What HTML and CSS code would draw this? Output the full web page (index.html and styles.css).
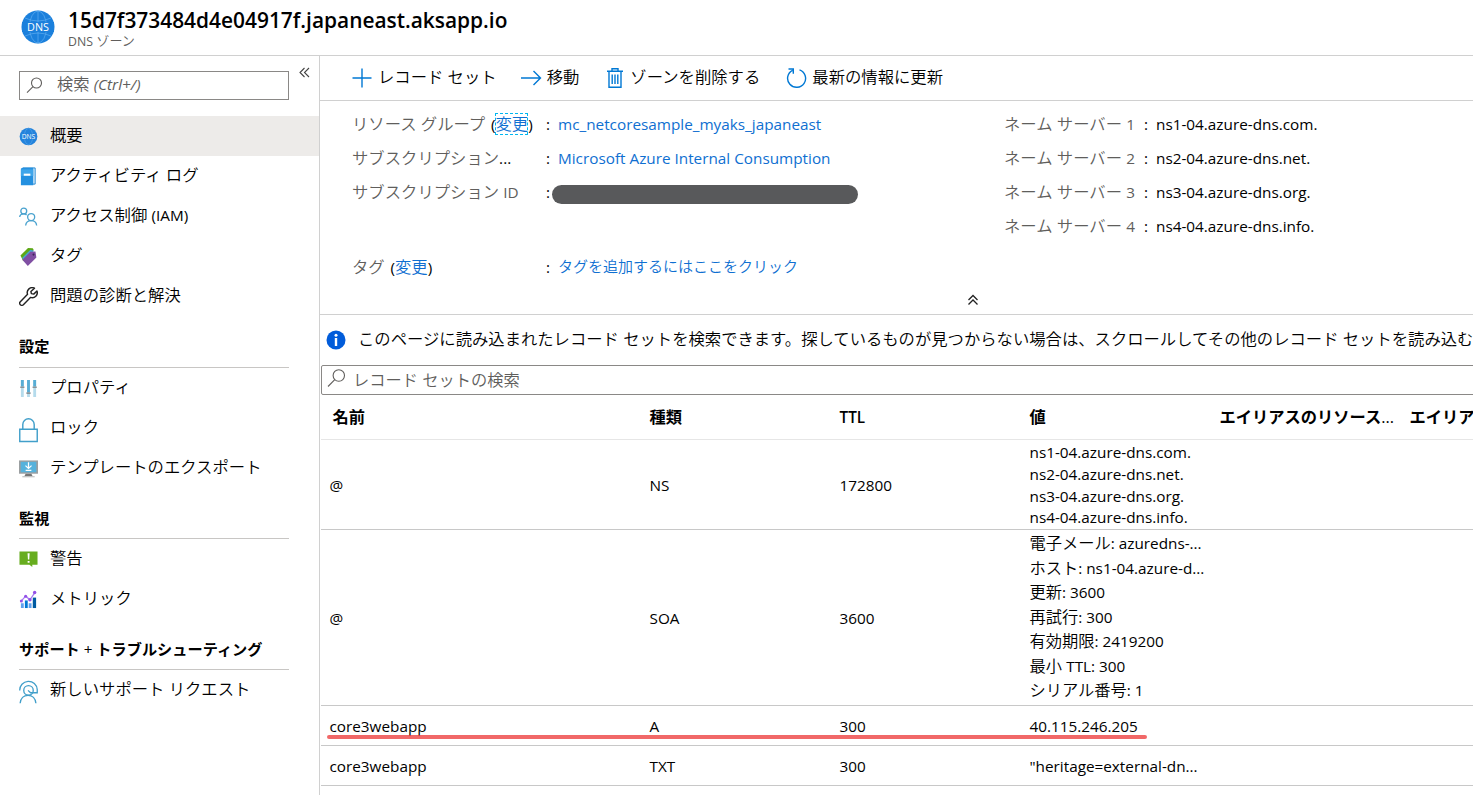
FILE: index.html
```html
<!DOCTYPE html>
<html lang="ja">
<head>
    <meta charset="utf-8">
    <title>15d7f373484d4e04917f.japaneast.aksapp.io</title>
    <link rel="stylesheet" href="styles.css">
</head>
<body>

    <header class="title-bar">
        <svg class="dns-logo" viewBox="0 0 34 34">
            <circle cx="17" cy="17" r="16.5" fill="#1b80dc"/>
            <g fill="none" stroke="#5eadf0" stroke-width=".7">
                <ellipse cx="17" cy="17" rx="8.5" ry="16"/>
                <path d="M17 1v32M4 8q13 6 26 0M4 26q13-6 26 0"/>
            </g>
            <path d="M1 12h32v10H1z" fill="#1b80dc"/>
            <text x="17" y="21" text-anchor="middle" font-size="10.8" fill="#fff">DNS</text>
        </svg>
        <div>
            <h1>15d7f373484d4e04917f.japaneast.aksapp.io</h1>
            <p class="subtitle"><span>DNS</span> ゾーン</p>
        </div>
    </header>

    <div class="layout">
        <nav class="sidebar">
            <div class="search-row">
                <div class="search-box">
                    <svg width="17" height="17" viewBox="0 0 17 17" fill="none" stroke="#605e5c" stroke-width="1.1"><circle cx="10.5" cy="6" r="5"/><path d="M7 9.6L1 15.6"/></svg>
                    <span>検索 <i>(Ctrl+/)</i></span>
                </div>
                <svg class="collapse" width="12" height="12" viewBox="0 0 12 12" fill="none" stroke="#444" stroke-width="1.1"><path d="M5.5 1L1 5.500 5.500 10M10 1L5.500 5.500 10 10"/></svg>
            </div>

            <a class="item active">
                <svg viewBox="0 0 20 20"><circle cx="10" cy="10" r="9.300" fill="#2383dc"/><ellipse cx="10" cy="10" rx="4.500" ry="8.500" fill="none" stroke="#4f9fe6" stroke-width=".8"/><path d="M1.500 7h17v6h-17z" fill="#2383dc"/><text x="10" y="12.500" text-anchor="middle" font-size="7" fill="#fff">DNS</text></svg>
                <span>概要</span>
            </a>
            <a class="item">
                <svg viewBox="0 0 20 20"><path d="M4 1h13v17H4z" fill="#dceefa" stroke="#1e86d2" stroke-width="1"/><path d="M2 1.500L4 .8h11v18.500H2z" fill="#2490e0"/><path d="M2 2.500h13v7H2z" fill="#3fa5ea"/><path d="M5 7h7v2.200H5z" fill="#fff"/></svg>
                <span>アクティビティ ログ</span>
            </a>
            <a class="item">
                <svg viewBox="0 0 20 20" fill="none" stroke="#4ba3cf" stroke-width="1.400"><circle cx="5" cy="4.200" r="3.100"/><path d="M.7 10.500C1 8.500 2.700 7.300 5 7.300q1.800 0 3 1"/><circle cx="12.800" cy="10.600" r="3.700"/><path d="M7 19.500c.3-3.200 2.600-5.200 5.800-5.200s5.500 2 5.800 5.200"/></svg>
                <span>アクセス制御 <span class="en">(IAM)</span></span>
            </a>
            <a class="item">
                <svg viewBox="0 0 20 20"><path d="M1.500 9L9.500 1l5 .2 1 2L4.500 15z" fill="#5ea815"/><path d="M3.200 11.500L12 3l3.800 1-9.500 12z" fill="#45a8cf"/><path d="M3.500 13.500L12 5l5.300-.3 1 6.300-9 9z" fill="#804fa3"/><circle cx="15.300" cy="8" r="1.100" fill="#3c2459"/></svg>
                <span>タグ</span>
            </a>
            <a class="item">
                <svg viewBox="0 0 20 20" fill="none" stroke="#222" stroke-width="1.500" stroke-linejoin="round"><path d="M16.300 1.300A5.200 5.200 0 0 0 9 7.700L1.400 15.400a2.200 2.200 0 0 0 3.200 3.200l7.700-7.700A5.200 5.200 0 0 0 18.900 4.200L15.500 7.500l-2.500-.5-.5-2.300z"/></svg>
                <span>問題の診断と解決</span>
            </a>

            <h2>設定</h2>
            <a class="item">
                <svg viewBox="0 0 20 20"><path d="M2 1h3v18H2zM8.500 1h3v18h-3zM15 1h3v18h-3z" fill="#b5dbec"/><path d="M2 1h3v7H2zM8.500 1h3v13h-3zM15 1h3v7h-3z" fill="#57add5"/><path d="M1.300 7.800h4.400v1.700H1.300zM7.800 14h4.400v1.700H7.800zM14.300 7.800h4.400v1.700h-4.400z" fill="#8a9499"/></svg>
                <span>プロパティ</span>
            </a>
            <a class="item">
                <svg class="lock" viewBox="0 0 20 26" fill="none" stroke="#419fca" stroke-width="1.500"><path d="M.8 12.200h18.400v12.900H.8zM4 12V7.200a6 6 0 0 1 12 0V12"/></svg>
                <span>ロック</span>
            </a>
            <a class="item">
                <svg viewBox="0 0 20 20"><path d="M0 1.500h20v14H0z" fill="#9b9fa1"/><path d="M1.800 3h16.400v11H1.800z" fill="#56b2dc"/><path d="M7 15.500h6l1.500 3h-9z" fill="#777"/><path d="M3.500 18h13v1.300h-13z" fill="#c4c4c4"/><path d="M10 3.500v6M6.800 7L10 10l3.200-3M7 12h6" fill="none" stroke="#fff" stroke-width="1.300"/></svg>
                <span>テンプレートのエクスポート</span>
            </a>

            <h2>監視</h2>
            <a class="item">
                <svg viewBox="0 0 20 20"><path d="M.5 1.500h19v14H14V18l-3-2.500H.5z" fill="#67ad1f"/><path d="M9 3.500h2.200l-.4 6.500H9.400zM9.100 11.500h2v1.800h-2z" fill="#fff"/></svg>
                <span>警告</span>
            </a>
            <a class="item">
                <svg viewBox="0 0 20 20"><path d="M2 14h3v5H2zM10.200 14h3v5h-3z" fill="#5ea0ef"/><path d="M6.200 11h3v8h-3z" fill="#0078d4"/><path d="M14.500 8H18v11h-3.500z" fill="#005ba1"/><path d="M2.500 11.500L7 6.500l4.500 3.800L16.500 3" fill="none" stroke="#a67af4" stroke-width="1.300"/><g fill="#9450e6"><circle cx="2.500" cy="11.500" r="1.600"/><circle cx="7" cy="6.500" r="1.600"/><circle cx="11.500" cy="10.300" r="1.800"/><circle cx="16.500" cy="2.700" r="1.800"/></g></svg>
                <span>メトリック</span>
            </a>

            <h2>サポート <span class="plus">+</span> トラブルシューティング</h2>
            <a class="item">
                <svg class="support" viewBox="0 0 20 24" fill="none" stroke="#419fca" stroke-width="1.400"><path d="M.8 10.500A9.200 9.200 0 0 1 19.200 9.500v3.300h-4.500"/><circle cx="10" cy="10.300" r="5"/><path d="M9.500 10.300l2.700 2.500h2.500M1.200 23.800c.5-4.800 3.700-8.300 8.300-8.300s7.800 3.500 8.300 8.300"/></svg>
                <span>新しいサポート リクエスト</span>
            </a>
        </nav>

        <main>
            <div class="toolbar">
                <a class="tool tool-add"><svg width="20" height="20" viewBox="0 0 20 20"><path d="M10 .5v19M.5 10h19"/></svg>レコード セット</a>
                <a class="tool tool-move"><svg width="21" height="16" viewBox="0 0 21 16"><path d="M0 8h19.500M12.500 1l7 7-7 7"/></svg>移動</a>
                <a class="tool tool-delete"><svg width="16" height="20" viewBox="0 0 16 20"><path d="M0 3.300h16M5 3V.8h6V3M2 3.500v15.700h12V3.500M5.200 6.500v9.500M8 6.500v9.500M10.800 6.500v9.500"/></svg>ゾーンを削除する</a>
                <a class="tool tool-refresh"><svg width="21" height="21" viewBox="0 0 21 21"><path d="M13.500 1.800A9 9 0 1 1 6.500 2.300M2.500 1h4.800v4.800"/></svg>最新の情報に更新</a>
            </div>

            <section class="essentials">
                <dl class="props">
                    <dt>リソース グループ <b class="change">(<a class="focused">変更</a>)</b></dt><dd><i>:</i><a class="en">mc_netcoresample_myaks_japaneast</a></dd>
                    <dt>サブスクリプション<b>...</b></dt><dd><i>:</i><a class="en">Microsoft Azure Internal Consumption</a></dd>
                    <dt>サブスクリプション <span class="en">ID</span></dt><dd><i>:</i><span class="redacted"></span></dd>
                    <dt class="tags">タグ <b class="change">(<a>変更</a>)</b></dt><dd class="tags"><i>:</i><a class="add-tag">タグを追加するにはここをクリック</a></dd>
                </dl>
                <dl class="props servers">
                    <dt>ネーム サーバー <span class="en">1</span></dt><dd class="en"><i>:</i>ns1-04.azure-dns.com.</dd>
                    <dt>ネーム サーバー <span class="en">2</span></dt><dd class="en"><i>:</i>ns2-04.azure-dns.net.</dd>
                    <dt>ネーム サーバー <span class="en">3</span></dt><dd class="en"><i>:</i>ns3-04.azure-dns.org.</dd>
                    <dt>ネーム サーバー <span class="en">4</span></dt><dd class="en"><i>:</i>ns4-04.azure-dns.info.</dd>
                </dl>
                <svg class="fold" width="12" height="12" viewBox="0 0 12 12" fill="none" stroke="#222" stroke-width="1.300"><path d="M1.500 6L6 1.500 10.500 6M1.500 10.500L6 6l4.500 4.500"/></svg>
            </section>

            <div class="info">
                <svg width="20" height="20" viewBox="0 0 20 20"><circle cx="10" cy="10" r="9.500" fill="#015cda"/><circle cx="10" cy="5.200" r="1.500" fill="#fff"/><path d="M8.800 8h2.400v8H8.800z" fill="#fff"/></svg>
                <span>このページに読み込まれたレコード セットを検索できます。探しているものが見つからない場合は、スクロールしてその他のレコード セットを読み込む</span>
            </div>

            <div class="filter">
                <svg width="19" height="19" viewBox="0 0 19 19" fill="none" stroke="#605e5c" stroke-width="1.100"><circle cx="11.800" cy="6.500" r="5.700"/><path d="M7.800 10.600L1 17.500"/></svg>
                <span>レコード セットの検索</span>
            </div>

            <div class="records">
                <div class="row head"><span>名前</span><span>種類</span><span class="en">TTL</span><span>値</span><span>エイリアスのリソース<b>...</b></span><span>エイリア</span></div>
                <div class="row ns">
                    <span class="en">@</span><span class="en">NS</span><span class="en">172800</span>
                    <ul class="en">
                        <li>ns1-04.azure-dns.com.</li>
                        <li>ns2-04.azure-dns.net.</li>
                        <li>ns3-04.azure-dns.org.</li>
                        <li>ns4-04.azure-dns.info.</li>
                    </ul>
                </div>
                <div class="row soa">
                    <span class="en">@</span><span class="en">SOA</span><span class="en">3600</span>
                    <ul>
                        <li>電子メール<span class="en">: azuredns-...</span></li>
                        <li>ホスト<span class="en">: ns1-04.azure-d...</span></li>
                        <li>更新<span class="en">: 3600</span></li>
                        <li>再試行<span class="en">: 300</span></li>
                        <li>有効期限<span class="en">: 2419200</span></li>
                        <li>最小 <span class="en">TTL: 300</span></li>
                        <li>シリアル番号<span class="en">: 1</span></li>
                    </ul>
                </div>
                <div class="row marked"><span class="en">core3webapp</span><span class="en">A</span><span class="en">300</span><span class="en">40.115.246.205</span></div>
                <div class="row"><span class="en">core3webapp</span><span class="en">TXT</span><span class="en">300</span><span class="en">"heritage=external-dn...</span></div>
            </div>
        </main>
    </div>

</body>
</html>
```
FILE: styles.css
```css
* {
    box-sizing: border-box;
}

body {
    margin: 0;
    height: 795px;
    overflow: hidden;
    display: flex;
    flex-direction: column;
    background-color: #fff;
    color: #000;
    font-family: "Open Sans", "Noto Sans CJK JP", sans-serif;
    font-size: 16.25px;
    font-weight: 350;
    line-height: 22px;
    white-space: nowrap;
}

h1, h2, p, ul, dl, dd {
    margin: 0;
    padding: 0;
}

ul {
    list-style: none;
}

svg {
    display: block;
    flex: none;
}

svg text {
    font-weight: 400;
}

/* latin text runs a little smaller than the kana next to it */
.en {
    font-size: 15.3px;
    font-weight: 400;
}

/* header */
.title-bar {
    height: 56px;
    flex: none;
    display: flex;
    padding: 10px 0 0 21px;
    gap: 13px;
    border-bottom: 1px solid #d0d0d0;
}

.dns-logo {
    width: 34px;
    height: 34px;
}

h1 {
    margin-top: -1px;
    font-size: 20.9px;
    font-weight: 600;
    line-height: 22px;
}

.subtitle {
    margin-top: 1px;
    font-size: 13.1px;
    line-height: 18px;
    color: #605e5c;
}

.subtitle span {
    font-size: 12.3px;
    font-weight: 400;
}

.layout {
    display: flex;
    flex: 1;
    min-height: 0;
}

/* left menu */
.sidebar {
    width: 320px;
    flex: none;
    border-right: 1px solid #d0d0d0;
}

.search-row {
    display: flex;
    height: 60px;
    padding: 15px 0 0 19px;
    gap: 10px;
}

.search-box {
    width: 270px;
    height: 29px;
    border: 1px solid #8a8886;
    display: flex;
    align-items: center;
    padding-left: 6px;
    gap: 14px;
    color: #605e5c;
}

.search-box span {
    padding-bottom: 4px;
}

.search-box i {
    font-size: 15.3px;
    font-weight: 400;
}

.collapse {
    margin-top: -4px;
}

.item {
    display: flex;
    align-items: center;
    gap: 12px;
    height: 40px;
    padding: 0 0 2px 19px;
    font-size: 16.35px;
}

.item svg {
    width: 19px;
    height: 19px;
    margin-top: 2px;
}

.item .lock {
    height: 26px;
    margin-top: 6px;
}

.item .support {
    height: 24px;
    margin-top: 6px;
}

.item.active {
    background-color: #edebe9;
}

h2 {
    width: 270px;
    height: 51px;
    margin-left: 19px;
    padding-top: 19px;
    border-bottom: 1px solid #c8c6c4;
    font-size: 15.2px;
    font-weight: 700;
}

h2:first-of-type {
    height: 52px;
}

.plus {
    font-weight: 400;
}

/* command bar */
main {
    flex: 1;
    min-width: 0;
    overflow: hidden;
}

.toolbar {
    height: 45px;
    display: flex;
    align-items: center;
    padding: 0 0 2px 32px;
    border-bottom: 1px solid #d0d0d0;
    font-size: 16.35px;
}

.tool {
    display: flex;
    align-items: center;
}

.tool svg {
    fill: none;
    stroke: #0078d4;
    stroke-width: 1.4;
    margin-top: 2px;
}

.tool-add svg {
    margin-right: 6px;
}

.tool-move {
    margin-left: 24px;
}

.tool-move svg {
    margin-right: 5px;
}

.tool-delete {
    margin-left: 28px;
}

.tool-delete svg {
    margin-right: 7px;
}

.tool-refresh {
    margin-left: 26px;
}

.tool-refresh svg {
    margin-right: 5px;
}

/* essentials */
.essentials {
    position: relative;
    display: flex;
    height: 214px;
    padding: 6px 0 0 32px;
    border-bottom: 1px solid #d0d0d0;
}

.props {
    display: grid;
    grid-template-columns: 194px 458px;
    grid-template-rows: 34px 34px 34px 74px;
    align-content: start;
    align-items: center;
}

.servers {
    grid-template-columns: 140px 200px;
    grid-template-rows: repeat(4, 34px);
}

dt {
    color: #605e5c;
    font-size: 16.35px;
}

dt b {
    color: #000;
    font-weight: 400;
    font-size: 15.3px;
}

.change {
    margin-left: 1.5px;
}

dt b a {
    font-size: 16.35px;
    font-weight: 350;
}

a.focused {
    outline: 1.5px dashed #00b7f0;
    outline-offset: -1px;
}

dd {
    display: flex;
    align-items: center;
}

dd i {
    width: 12px;
    font-style: normal;
    font-weight: 400;
    font-size: 15.3px;
}

.props a {
    color: #0f6fd1;
}

.props .tags {
    align-self: end;
    margin-bottom: 5px;
}

.props .add-tag {
    margin-top: -3px;
    font-size: 15px;
}

.redacted {
    width: 306px;
    height: 19px;
    margin: 4px 0 0 -6px;
    border-radius: 10px;
    background-color: #58595b;
}

.fold {
    position: absolute;
    left: 647px;
    bottom: 8px;
}

.info {
    height: 50px;
    display: flex;
    align-items: center;
    padding-left: 6px;
    gap: 12px;
    font-size: 16.33px;
}

.info span {
    margin-top: -2px;
}

.filter {
    height: 30px;
    width: 1200px;
    display: flex;
    align-items: center;
    margin-left: 1px;
    padding-left: 5px;
    gap: 7px;
    border: 1px solid #8a8886;
    border-radius: 2px;
    color: #605e5c;
}

.filter svg {
    margin-bottom: 4px;
}

/* record sets */
.row {
    display: grid;
    grid-template-columns: 320px 190px 190px 190px 190px 190px;
    align-items: center;
    height: 40px;
    margin-left: 1px;
    padding-left: 8.5px;
    border-bottom: 1px solid #c8c8c8;
}

.head {
    height: 45px;
    font-weight: 700;
    border-bottom-color: #e6e6e6;
}

.head span:first-child {
    padding-left: 3px;
}

.head .en {
    font-weight: 600;
}

.head b {
    font-weight: 400;
}

.ns {
    height: 90px;
}

.ns ul {
    padding-top: 2px;
}

.ns li {
    line-height: 21.75px;
}

.soa {
    height: 176px;
}

.soa ul {
    padding-bottom: 1px;
}

.soa li {
    line-height: 24.6px;
}

.marked {
    position: relative;
}

/* hand drawn underline over the A record */
.marked::after {
    content: "";
    position: absolute;
    left: 6px;
    top: 29px;
    width: 820px;
    height: 4px;
    border-radius: 2px;
    background-color: rgba(238, 66, 66, .8);
}
```
